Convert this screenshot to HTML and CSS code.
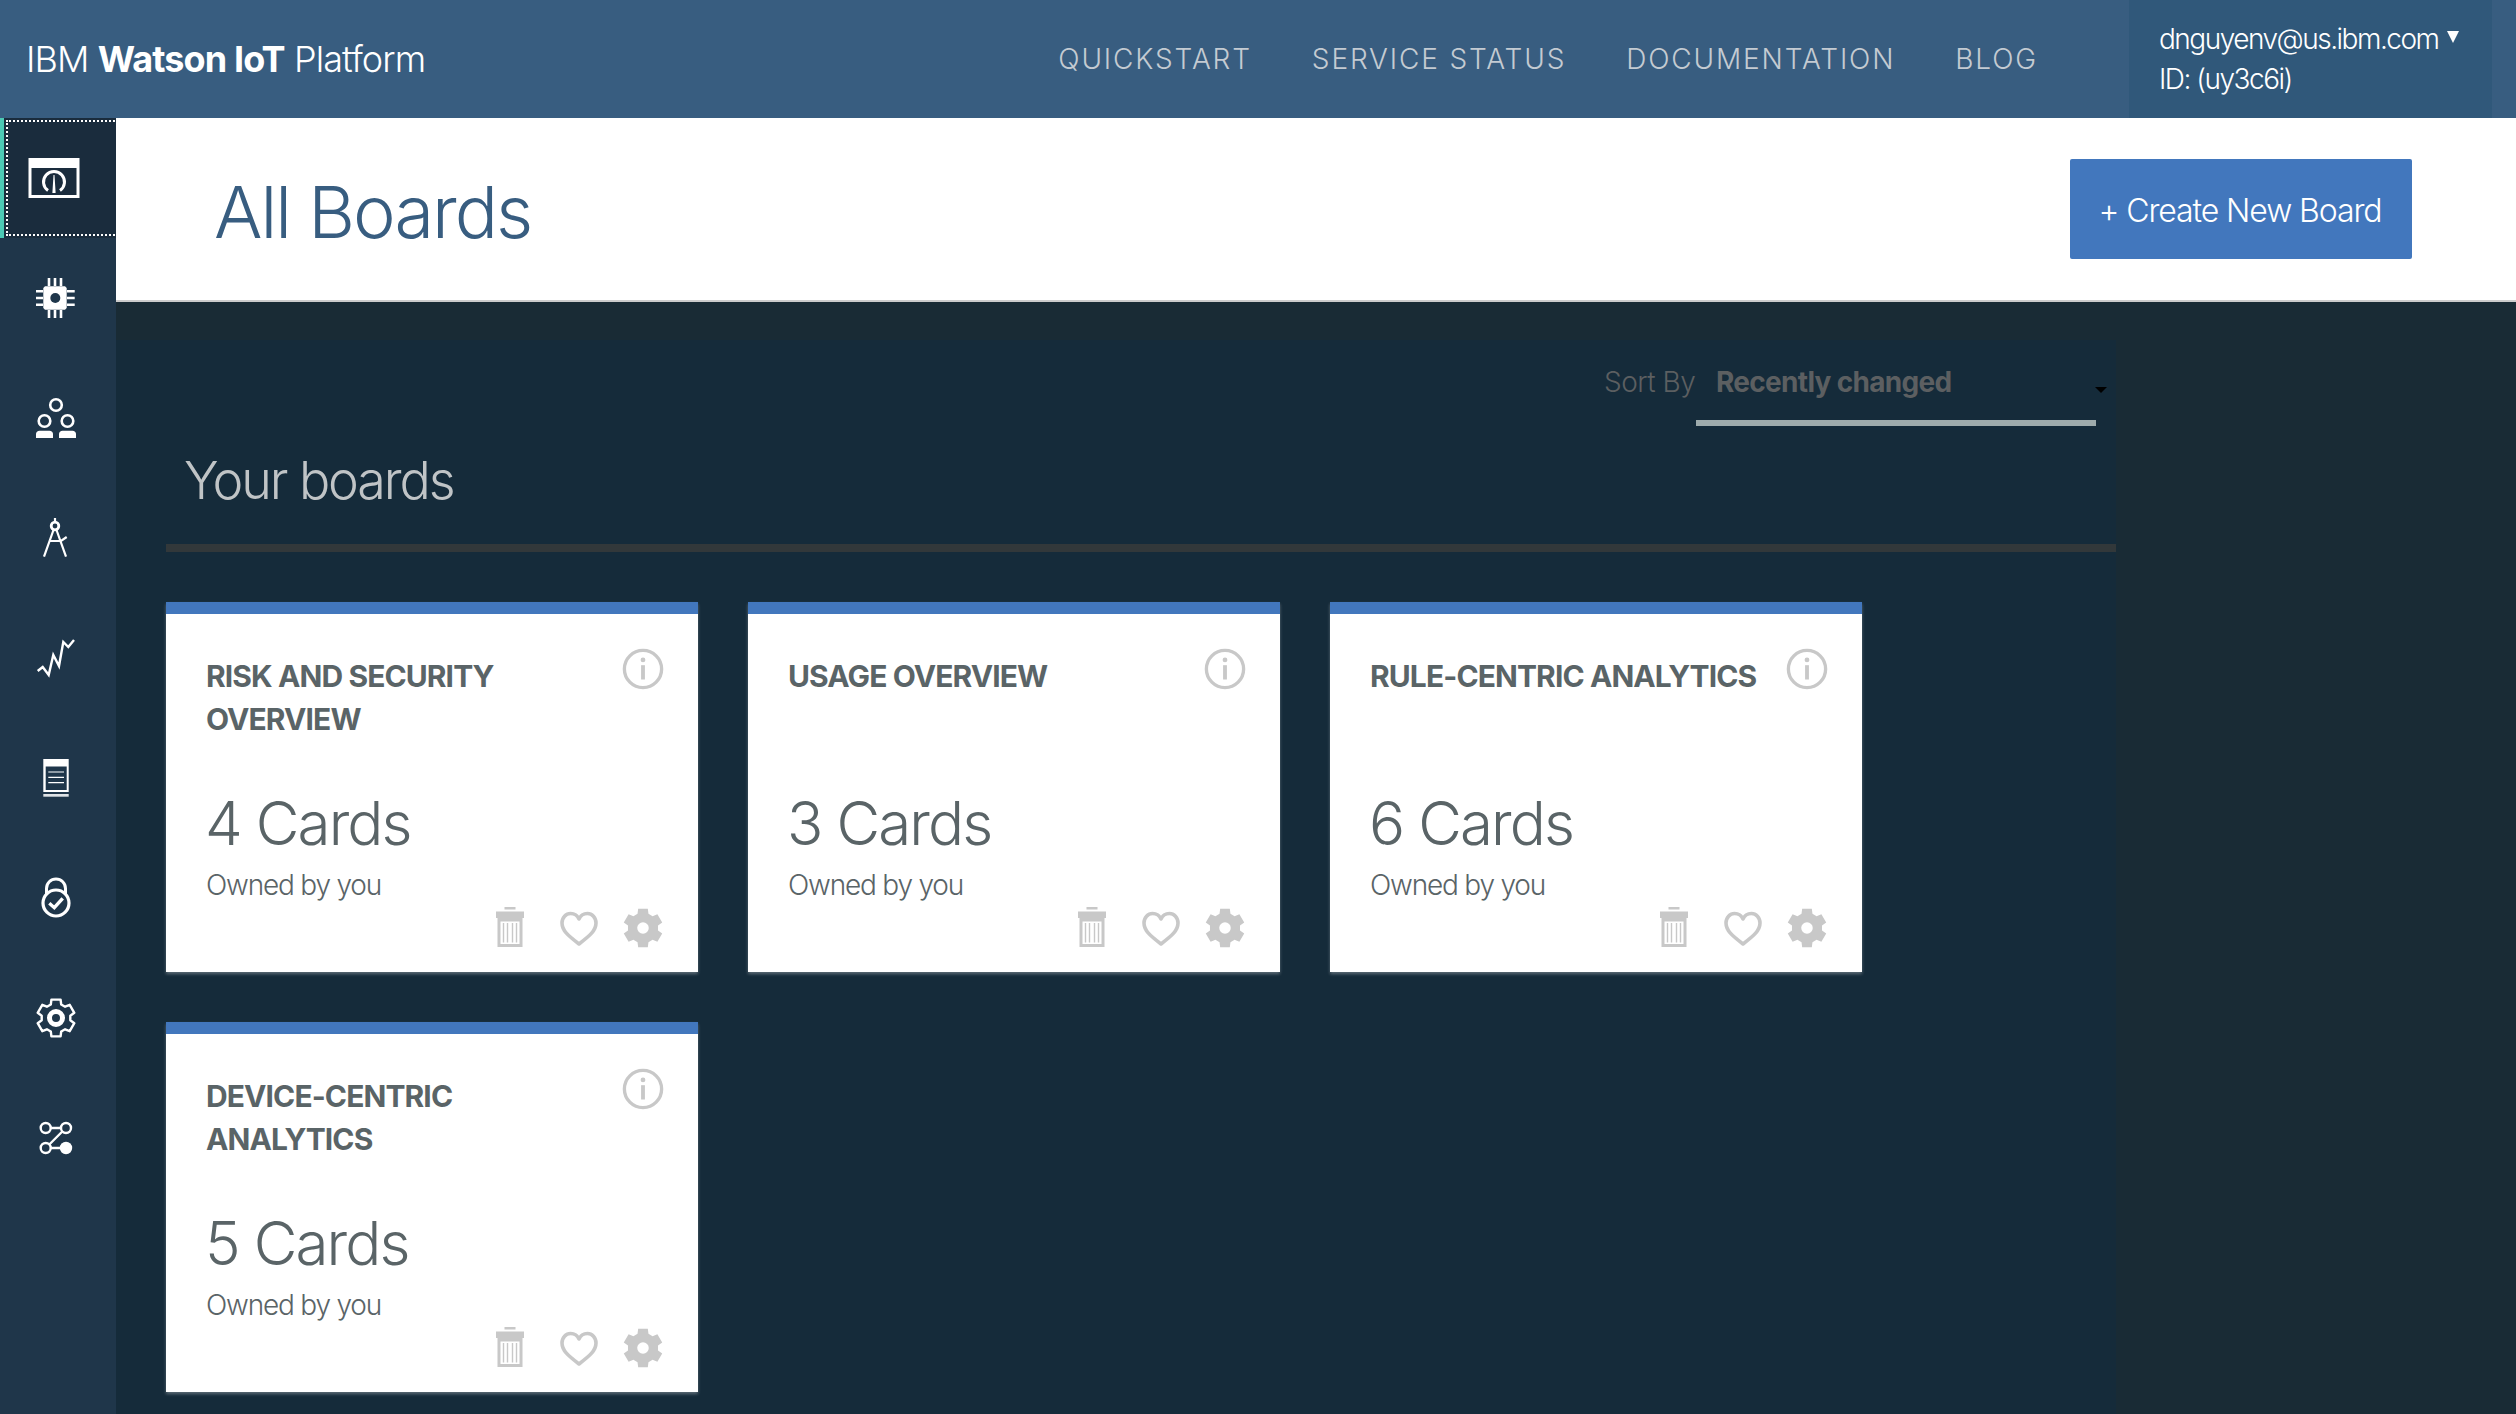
FILE: index.html
```html
<!DOCTYPE html>
<html lang="en">

<head>
    <meta charset="UTF-8">
    <meta name="viewport" content="width=device-width, initial-scale=1.0">
    <title>IBM Watson IoT Platform</title>
    <link rel="stylesheet" href="styles.css">
</head>

<body>
    <svg class="sprite" width="0" height="0">
        <defs>
            <path id="gearShape" d="M24.8 16.5L25.4 11.6H34.6L35.2 16.5L39.1 18.7L43.7 16.8L48.3 24.8L44.3 27.7V32.3L48.3 35.2L43.7 43.2L39.1 41.3L35.2 43.5L34.6 48.4H25.4L24.8 43.5L20.9 41.3L16.3 43.2L11.7 35.2L15.7 32.3V27.7L11.7 24.8L16.3 16.8L20.9 18.7Z" />
            <g id="infoIcon">
                <circle cx="22" cy="22" r="19.5" fill="none" stroke="#c8c8c8" stroke-width="3.5" />
                <circle cx="22" cy="12.5" r="2.5" fill="#c8c8c8" />
                <rect x="20" y="18" width="4" height="15" fill="#c8c8c8" />
            </g>
            <g id="trashIcon">
                <rect x="8.5" y="0" width="11" height="2.5" fill="#c8c8c8" />
                <rect x="0" y="4.5" width="28" height="6.5" fill="#c8c8c8" />
                <rect x="1.5" y="11" width="25" height="29" fill="#c8c8c8" />
                <rect x="4.5" y="14.5" width="19" height="22.5" fill="#fff" />
                <path d="M7.5 16V35.5M11.5 16V35.5M16.5 16V35.5M20.5 16V35.5" stroke="#c8c8c8" stroke-width="1.4" />
            </g>
            <path id="heartIcon" d="M19 33C8 24.5 2 19.5 2 12C2 6.5 6 2.5 10.5 2.5C14 2.5 17.5 4.5 19 8C20.5 4.5 24 2.5 27.5 2.5C32 2.5 36 6.5 36 12C36 19.5 30 24.5 19 33Z" fill="none" stroke="#c8c8c8" stroke-width="3.6" stroke-linejoin="round" />
        </defs>
    </svg>

    <header class="topbar">
        <div class="logo">IBM <strong>Watson IoT</strong> Platform</div>
        <nav class="topnav">
            <a href="#">QUICKSTART</a>
            <a href="#">SERVICE STATUS</a>
            <a href="#">DOCUMENTATION</a>
            <a href="#">BLOG</a>
        </nav>
        <div class="account">
            <div>dnguyenv@us.ibm.com <span class="caret"></span></div>
            <div>ID: (uy3c6i)</div>
        </div>
    </header>

    <div class="layout">
        <aside class="sidebar">
            <a class="side-item active" href="#">
                <svg class="side-icon" viewBox="0 0 60 60">
                    <rect x="4.5" y="10" width="51" height="40" fill="#fff" />
                    <rect x="7.5" y="20" width="45" height="27" fill="#1a2c3d" />
                    <path d="M24 42.5A10.5 10.5 0 1 1 36 42.5" fill="none" stroke="#fff" stroke-width="3" />
                    <path d="M29.5 27H30.5L31.6 45H28.4Z" fill="#fff" />
                </svg>
            </a>
            <a class="side-item" href="#">
                <svg class="side-icon" viewBox="0 0 60 60">
                    <path d="M19 18.3H39L40.7 20V40L39 41.7H19L17.3 40V20Z" fill="#fff" />
                    <circle cx="29.3" cy="30" r="5" fill="#1f364a" />
                    <path d="M23 10V18M29 10V18M35 10V18M23 42V50M29 42V50M35 42V50M10 23.3H17M10 30H17M10 36.7H17M41 23.3H48.7M41 30H48.7M41 36.7H48.7" fill="none" stroke="#fff" stroke-width="2.6" />
                </svg>
            </a>
            <a class="side-item" href="#">
                <svg class="side-icon" viewBox="0 0 60 60">
                    <g fill="none" stroke="#fff" stroke-width="2.6">
                        <circle cx="30" cy="17" r="5.8" />
                        <circle cx="18.5" cy="33" r="5.8" />
                        <circle cx="41.5" cy="33" r="5.8" />
                    </g>
                    <path d="M10 50V46C10 44 11.5 42.7 13.5 42.7H23.5C25.5 42.7 27 44 27 46V50Z" fill="#fff" />
                    <path d="M33 50V46C33 44 34.5 42.7 36.5 42.7H46.5C48.5 42.7 50 44 50 46V50Z" fill="#fff" />
                </svg>
            </a>
            <a class="side-item" href="#">
                <svg class="side-icon" viewBox="0 0 60 60">
                    <g fill="none" stroke="#fff" stroke-width="2.2">
                        <path d="M29 10V14M27.5 22L18 48.7M30.5 22L40 48.7M24 33H35L40.7 29" />
                    </g>
                    <circle cx="29" cy="18" r="3.8" fill="none" stroke="#fff" stroke-width="2.8" />
                </svg>
            </a>
            <a class="side-item" href="#">
                <svg class="side-icon" viewBox="0 0 60 60">
                    <path d="M11.7 43L16.7 39L22.7 47L27.3 27L33 38L37.3 14L42.3 19L48 12" fill="none" stroke="#fff" stroke-width="2.4" />
                </svg>
            </a>
            <a class="side-item" href="#">
                <svg class="side-icon" viewBox="0 0 60 60">
                    <rect x="17.3" y="11" width="25.4" height="33" fill="#fff" />
                    <rect x="19.7" y="18.5" width="21" height="23.5" fill="#1f364a" />
                    <rect x="17.3" y="46" width="25.4" height="2.7" fill="#dfe3e6" />
                    <path d="M22.3 24H38M22.3 29.3H38M22.3 34.7H38" fill="none" stroke="#fff" stroke-width="1.2" />
                </svg>
            </a>
            <a class="side-item" href="#">
                <svg class="side-icon" viewBox="0 0 60 60">
                    <path d="M20.5 26V20.5A9.5 9.5 0 0 1 39.5 20.5V26" fill="none" stroke="#fff" stroke-width="3" />
                    <circle cx="30" cy="35" r="13" fill="#1f364a" stroke="#fff" stroke-width="3.2" />
                    <path d="M23.3 35.3L28.3 39.7L36.7 30.3" fill="none" stroke="#fff" stroke-width="3.4" />
                </svg>
            </a>
            <a class="side-item" href="#">
                <svg class="side-icon" viewBox="0 0 60 60">
                    <use href="#gearShape" fill="none" stroke="#fff" stroke-width="2.4" stroke-linejoin="round" />
                    <circle cx="30" cy="30" r="6.5" fill="none" stroke="#fff" stroke-width="5" />
                </svg>
            </a>
            <a class="side-item" href="#">
                <svg class="side-icon" viewBox="0 0 60 60">
                    <g fill="none" stroke="#fff" stroke-width="2.4">
                        <circle cx="19.7" cy="20" r="5" />
                        <circle cx="40" cy="20" r="5" />
                        <circle cx="19.7" cy="40" r="5" />
                        <path d="M24.7 20H35M36.3 23.5L23.3 36.5M24.7 40H35" />
                    </g>
                    <circle cx="40" cy="40" r="6.2" fill="#fff" />
                </svg>
            </a>
        </aside>

        <div class="content">
            <div class="page-head">
                <h1>All Boards</h1>
                <button class="create-btn">+ Create New Board</button>
            </div>

            <main class="panel">
                <div class="sort-row">
                    <span class="sort-label">Sort By</span>
                    <div class="sort-select">
                        <span>Recently changed</span>
                        <i class="sort-arrow"></i>
                    </div>
                </div>

                <h2 class="section-title">Your boards</h2>

                <div class="board-grid">
                    <section class="board">
                        <div class="board-top">
                            <h3>RISK AND SECURITY OVERVIEW</h3>
                            <svg class="info" viewBox="0 0 44 44"><use href="#infoIcon" /></svg>
                        </div>
                        <div class="board-count">4 Cards</div>
                        <div class="board-owner">Owned by you</div>
                        <div class="board-actions">
                            <svg class="trash" viewBox="0 0 28 40"><use href="#trashIcon" /></svg>
                            <svg class="heart" viewBox="0 0 38 36"><use href="#heartIcon" /></svg>
                            <svg class="gear" viewBox="10 10 40 40"><use href="#gearShape" fill="#c8c8c8" /><circle cx="30" cy="30" r="5.5" fill="#fff" /></svg>
                        </div>
                    </section>

                    <section class="board">
                        <div class="board-top">
                            <h3>USAGE OVERVIEW</h3>
                            <svg class="info" viewBox="0 0 44 44"><use href="#infoIcon" /></svg>
                        </div>
                        <div class="board-count">3 Cards</div>
                        <div class="board-owner">Owned by you</div>
                        <div class="board-actions">
                            <svg class="trash" viewBox="0 0 28 40"><use href="#trashIcon" /></svg>
                            <svg class="heart" viewBox="0 0 38 36"><use href="#heartIcon" /></svg>
                            <svg class="gear" viewBox="10 10 40 40"><use href="#gearShape" fill="#c8c8c8" /><circle cx="30" cy="30" r="5.5" fill="#fff" /></svg>
                        </div>
                    </section>

                    <section class="board">
                        <div class="board-top">
                            <h3>RULE-CENTRIC ANALYTICS</h3>
                            <svg class="info" viewBox="0 0 44 44"><use href="#infoIcon" /></svg>
                        </div>
                        <div class="board-count">6 Cards</div>
                        <div class="board-owner">Owned by you</div>
                        <div class="board-actions">
                            <svg class="trash" viewBox="0 0 28 40"><use href="#trashIcon" /></svg>
                            <svg class="heart" viewBox="0 0 38 36"><use href="#heartIcon" /></svg>
                            <svg class="gear" viewBox="10 10 40 40"><use href="#gearShape" fill="#c8c8c8" /><circle cx="30" cy="30" r="5.5" fill="#fff" /></svg>
                        </div>
                    </section>

                    <section class="board">
                        <div class="board-top">
                            <h3>DEVICE-CENTRIC ANALYTICS</h3>
                            <svg class="info" viewBox="0 0 44 44"><use href="#infoIcon" /></svg>
                        </div>
                        <div class="board-count">5 Cards</div>
                        <div class="board-owner">Owned by you</div>
                        <div class="board-actions">
                            <svg class="trash" viewBox="0 0 28 40"><use href="#trashIcon" /></svg>
                            <svg class="heart" viewBox="0 0 38 36"><use href="#heartIcon" /></svg>
                            <svg class="gear" viewBox="10 10 40 40"><use href="#gearShape" fill="#c8c8c8" /><circle cx="30" cy="30" r="5.5" fill="#fff" /></svg>
                        </div>
                    </section>
                </div>
            </main>
        </div>
    </div>
</body>

</html>
```

FILE: styles.css
```css
* {
    box-sizing: border-box;
}

html,
body {
    margin: 0;
    height: 100%;
    overflow: hidden;
}

body {
    display: flex;
    flex-direction: column;
    font-family: 'Inter', 'Liberation Sans', sans-serif;
    font-weight: 300;
    background-color: #192b35;
}

.sprite {
    display: none;
}

a {
    text-decoration: none;
}

/* top bar */
.topbar {
    display: flex;
    align-items: center;
    height: 118px;
    flex-shrink: 0;
    background-color: #385d80;
    color: #fff;
}

.logo {
    margin-left: 26px;
    font-size: 36px;
    letter-spacing: -0.88px;
}

.logo strong {
    font-weight: 700;
}

.topnav {
    display: flex;
    gap: 60px;
    margin-left: auto;
    margin-right: 91px;
}

.topnav a {
    color: #c4cbd2;
    font-size: 28px;
    letter-spacing: 1.85px;
}

.account {
    display: flex;
    flex-direction: column;
    justify-content: center;
    width: 363px;
    height: 118px;
    margin-right: 24px;
    padding-left: 30px;
    background-color: #30587a;
    font-size: 28px;
    line-height: 40px;
    letter-spacing: -1.5px;
}

.caret {
    display: inline-block;
    margin-left: 2px;
    border-left: 6px solid transparent;
    border-right: 6px solid transparent;
    border-top: 12px solid #fff;
    vertical-align: 6px;
}

/* side nav + content */
.layout {
    display: flex;
    flex: 1;
    min-height: 0;
}

.sidebar {
    width: 116px;
    flex-shrink: 0;
    background-color: #1f364a;
}

.side-item {
    display: flex;
    align-items: center;
    justify-content: center;
    height: 120px;
    padding-right: 4px;
}

.side-item.active {
    position: relative;
    padding-right: 13px;
    background-color: #1a2c3d;
    border-left: 4px solid #4cc9b5;
}

.side-item.active::after {
    content: "";
    position: absolute;
    top: 2px;
    left: 2px;
    right: -2px;
    bottom: 2px;
    border: 2px dotted #fff;
}

.side-icon {
    width: 60px;
    height: 60px;
}

.content {
    display: flex;
    flex-direction: column;
    flex: 1;
    min-width: 0;
}

.page-head {
    display: flex;
    flex-shrink: 0;
    align-items: center;
    justify-content: space-between;
    height: 184px;
    padding: 0 104px 0 98px;
    background-color: #fff;
    border-bottom: 2px solid #ccc;
}

.page-head h1 {
    margin: 0;
    padding-top: 4px;
    color: #385d80;
    font-size: 72px;
    font-weight: 300;
    letter-spacing: -2px;
}

.create-btn {
    width: 342px;
    height: 100px;
    padding: 2px 2px 0 0;
    border: none;
    border-radius: 2px;
    background-color: #4277bd;
    color: #fff;
    font-family: inherit;
    font-weight: 300;
    font-size: 32px;
    letter-spacing: -1.1px;
}

.panel {
    flex: 1;
    min-height: 0;
    width: 2000px;
    margin-top: 38px;
    padding: 22px 0 0 50px;
    background-color: #152b3a;
}

.sort-row {
    display: flex;
    align-items: flex-start;
    padding-left: 1438px;
    font-size: 28px;
    color: #5c5f61;
}

.sort-label {
    width: 92px;
    letter-spacing: -0.5px;
    line-height: 40px;
}

.sort-select {
    position: relative;
    width: 400px;
    height: 64px;
    padding-left: 20px;
    border-bottom: 6px solid #9eabac;
    font-weight: 700;
    letter-spacing: -0.7px;
    line-height: 40px;
}

.sort-arrow {
    position: absolute;
    right: -11px;
    top: 25px;
    border-left: 6px solid transparent;
    border-right: 6px solid transparent;
    border-top: 6px solid #000;
}

.section-title {
    margin: 25px 0 0;
    padding: 0 0 33px 18px;
    border-bottom: 8px solid #32383a;
    color: #c0c4c6;
    font-size: 52px;
    font-weight: 300;
    line-height: 60px;
    letter-spacing: -2.1px;
}

/* boards */
.board-grid {
    display: grid;
    grid-template-columns: repeat(auto-fill, 532px);
    gap: 50px;
    margin-top: 50px;
}

.board {
    position: relative;
    height: 370px;
    padding: 41px 0 0 40px;
    background-color: #fff;
    border-top: 12px solid #4277bd;
    box-shadow: 0 2px 3px rgba(255, 255, 255, .3);
    color: #5a6467;
}

.board-top {
    height: 130px;
}

.board h3 {
    width: 395px;
    margin: 0;
    font-size: 30px;
    font-weight: 700;
    line-height: 43px;
    letter-spacing: -0.9px;
}

.info {
    position: absolute;
    top: 34px;
    right: 34px;
    width: 42px;
    height: 42px;
}

.board-count {
    margin-left: -1px;
    font-size: 60px;
    line-height: 76px;
    letter-spacing: -1.9px;
}

.board-owner {
    margin-top: 4px;
    font-size: 28px;
    line-height: 40px;
    letter-spacing: -1.2px;
}

.board-actions {
    position: absolute;
    right: 34px;
    bottom: 23px;
    display: flex;
    align-items: flex-end;
}

.trash {
    width: 28px;
    height: 40px;
    margin-bottom: 2px;
}

.heart {
    width: 38px;
    height: 36px;
    margin: 0 24px 2px 36px;
}

.gear {
    width: 42px;
    height: 42px;
}
```
